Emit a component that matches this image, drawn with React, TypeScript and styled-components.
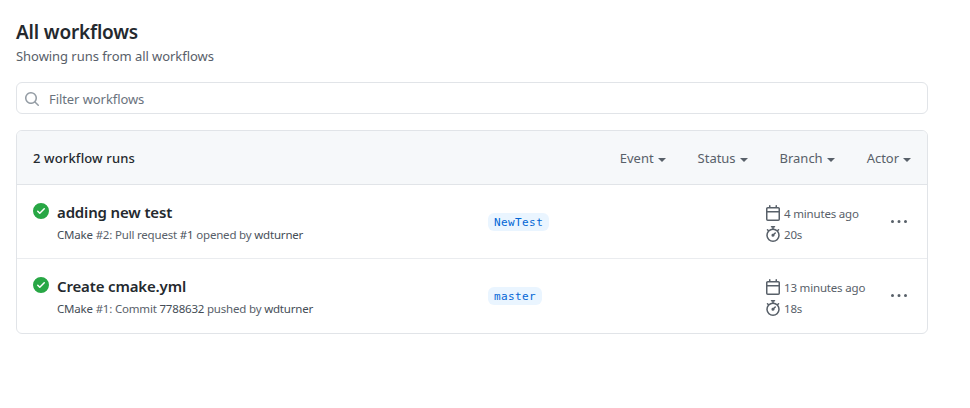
import React from 'react';
import styled, { createGlobalStyle } from 'styled-components';

const GlobalStyle = createGlobalStyle`
  *, *::before, *::after { box-sizing: border-box; }
  body {
    margin: 0;
    background: #fff;
    color: #24292e;
    font-family: "Noto Sans", "Open Sans", sans-serif;
    font-size: 14px;
    line-height: 21px;
  }
`;

const Page = styled.main`
  width: 944px;
  padding: 20px 16px;
`;

const Heading = styled.h1`
  margin: 0;
  font-size: 19px;
  font-weight: 600;
  line-height: 25px;
  letter-spacing: -0.17px;
`;

const Subtitle = styled.p`
  margin: 0 0 15px;
  padding-top: 1px;
  color: #586069;
  font-size: 13px;
  letter-spacing: -0.05px;
`;

const SearchBox = styled.label`
  display: flex;
  align-items: center;
  gap: 9px;
  height: 32px;
  padding: 0 7px;
  border: 1px solid #e1e4e8;
  border-radius: 6px;
  color: #959da5;
`;

const SearchInput = styled.input`
  flex: 1;
  padding: 2px 0 0;
  border: 0;
  outline: 0;
  background: transparent;
  color: #24292e;
  font: inherit;
  font-size: 13px;
  letter-spacing: -0.08px;
  &::placeholder { color: #6a737d; opacity: 1; }
`;

const Icon = styled.svg`
  display: block;
  flex: none;
  width: 16px;
  height: 16px;
  fill: currentColor;
  fill-rule: evenodd;
`;

const SearchIcon = styled(Icon)`
  margin-top: 2px;
`;

const Panel = styled.section`
  margin-top: 16px;
  border: 1px solid #e1e4e8;
  border-radius: 6px;
  overflow: hidden;
`;

const PanelHeader = styled.header`
  display: flex;
  align-items: center;
  justify-content: space-between;
  height: 54px;
  padding: 0 16px;
  background: #f6f8fa;
  border-bottom: 1px solid #e1e4e8;
`;

const Count = styled.strong`
  padding-top: 1px;
  font-size: 13px;
  font-weight: 500;
  letter-spacing: 0.14px;
`;

const Filters = styled.div`
  display: flex;
  gap: 32px;
`;

const FilterButton = styled.button`
  display: flex;
  align-items: center;
  padding: 1px 0 0;
  border: 0;
  background: none;
  color: #586069;
  font: inherit;
  font-size: 13px;
  letter-spacing: -0.02px;
  &::after {
    content: "";
    margin: 3px 0 0 4px;
    border: 4px solid transparent;
    border-top-color: currentColor;
    border-bottom: 0;
  }
`;

const Row = styled.article`
  display: grid;
  grid-template-columns: 16px 423px 276px 134px 32px;
  height: 73px;
  padding: 0 16px;
  & + & { border-top: 1px solid #eaecef; height: 75px; }
`;

const StatusIcon = styled(Icon)`
  margin-top: 18px;
  color: #28a745;
`;

const RunInfo = styled.div`
  padding: 17px 8px 0;
`;

const RunTitle = styled.h2`
  margin: 0;
  height: 19px;
  overflow: hidden;
  font-size: 15px;
  font-weight: 600;
  line-height: 20px;
  letter-spacing: -0.15px;
`;

const RunMeta = styled.div`
  margin-top: 5px;
  font-size: 11.5px;
  line-height: 18px;
  letter-spacing: -0.19px;
  color: #586069;
`;

const Strong = styled.span`
  color: #444d56;
`;

const BranchCell = styled.div`
  padding: 28px 0 0 16px;
`;

const Branch = styled.span`
  display: block;
  width: fit-content;
  height: 18px;
  padding: 0 6px;
  border-radius: 6px;
  background: #eaf5ff;
  color: #0366d6;
  font: 11px/19px "DejaVu Sans Mono", monospace;
  letter-spacing: 0.4px;
`;

const Times = styled.div`
  padding: 18px 0 0 17px;
  font-size: 11.5px;
  letter-spacing: -0.18px;
  color: #586069;
`;

const TimeLine = styled.div`
  display: flex;
  align-items: center;
  gap: 3px;
  height: 21px;
  white-space: nowrap;
`;

const TimeIcon = styled(Icon)`
  margin-bottom: 2px;
`;

const MenuButton = styled.button`
  display: flex;
  align-self: start;
  margin: 29px 0 0 9px;
  padding: 0;
  border: 0;
  background: none;
  color: #586069;
`;

const paths = {
  search: 'M11.5 7a4.499 4.499 0 11-8.998 0A4.499 4.499 0 0111.5 7zm-.82 4.74a6 6 0 111.06-1.06l3.04 3.04a.75.75 0 11-1.06 1.06l-3.04-3.04z',
  check: 'M8 16A8 8 0 108 0a8 8 0 000 16zm3.78-9.72a.75.75 0 00-1.06-1.06L6.75 9.19 5.28 7.72a.75.75 0 00-1.06 1.06l2 2a.75.75 0 001.06 0l4.5-4.5z',
  calendar: 'M4.75 0a.75.75 0 01.75.75V2h5V.75a.75.75 0 011.5 0V2h1.25c.966 0 1.75.784 1.75 1.75v10.5A1.75 1.75 0 0113.25 16H2.75A1.75 1.75 0 011 14.25V3.75C1 2.784 1.784 2 2.75 2H4V.75A.75.75 0 014.75 0zm0 3.5h8.5a.25.25 0 01.25.25V6h-11V3.75a.25.25 0 01.25-.25h2zm-2.25 4v6.75c0 .138.112.25.25.25h10.5a.25.25 0 00.25-.25V7.5h-11z',
  stopwatch: 'M5.75.75A.75.75 0 016.5 0h3a.75.75 0 010 1.5h-.75v1l-.001.041a6.718 6.718 0 013.464 1.435l.007-.006.75-.75a.75.75 0 111.06 1.06l-.75.75-.006.007a6.75 6.75 0 11-10.548 0L2.72 5.03l-.75-.75a.75.75 0 011.06-1.06l.75.75.007.006A6.718 6.718 0 017.25 2.541a.756.756 0 010-.041v-1H6.5a.75.75 0 01-.75-.75zM8 14.5A5.25 5.25 0 108 4a5.25 5.25 0 000 10.5zm.389-6.7l1.33-1.33a.75.75 0 111.061 1.06L9.45 8.861A1.502 1.502 0 118.389 7.8z',
  kebab: 'M8 9a1.5 1.5 0 100-3 1.5 1.5 0 000 3zM1.5 9a1.5 1.5 0 100-3 1.5 1.5 0 000 3zm13 0a1.5 1.5 0 100-3 1.5 1.5 0 000 3z',
};

const filters = ['Event', 'Status', 'Branch', 'Actor'];

const runs = [
  {
    title: 'adding new test',
    meta: <><Strong>CMake</Strong> #2: Pull request <Strong>#1</Strong> opened by <Strong>wdturner</Strong></>,
    branch: 'NewTest',
    when: '4 minutes ago',
    duration: '20s',
  },
  {
    title: 'Create cmake.yml',
    meta: <><Strong>CMake</Strong> #1: Commit <Strong>7788632</Strong> pushed by <Strong>wdturner</Strong></>,
    branch: 'master',
    when: '13 minutes ago',
    duration: '18s',
  },
];

export default function App() {
  return (
    <Page>
      <GlobalStyle />
      <Heading>All workflows</Heading>
      <Subtitle>Showing runs from all workflows</Subtitle>
      <SearchBox>
        <SearchIcon viewBox="0 0 16 16"><path d={paths.search} /></SearchIcon>
        <SearchInput placeholder="Filter workflows" />
      </SearchBox>
      <Panel>
        <PanelHeader>
          <Count>2 workflow runs</Count>
          <Filters>
            {filters.map((name) => <FilterButton key={name}>{name}</FilterButton>)}
          </Filters>
        </PanelHeader>
        {runs.map((run) => (
          <Row key={run.branch}>
            <StatusIcon viewBox="0 0 16 16"><path d={paths.check} /></StatusIcon>
            <RunInfo>
              <RunTitle>{run.title}</RunTitle>
              <RunMeta>{run.meta}</RunMeta>
            </RunInfo>
            <BranchCell><Branch>{run.branch}</Branch></BranchCell>
            <Times>
              <TimeLine><TimeIcon viewBox="0 0 16 16"><path d={paths.calendar} /></TimeIcon>{run.when}</TimeLine>
              <TimeLine><TimeIcon viewBox="0 0 16 16"><path d={paths.stopwatch} /></TimeIcon>{run.duration}</TimeLine>
            </Times>
            <MenuButton aria-label="Run options"><Icon viewBox="0 0 16 16"><path d={paths.kebab} /></Icon></MenuButton>
          </Row>
        ))}
      </Panel>
    </Page>
  );
}
